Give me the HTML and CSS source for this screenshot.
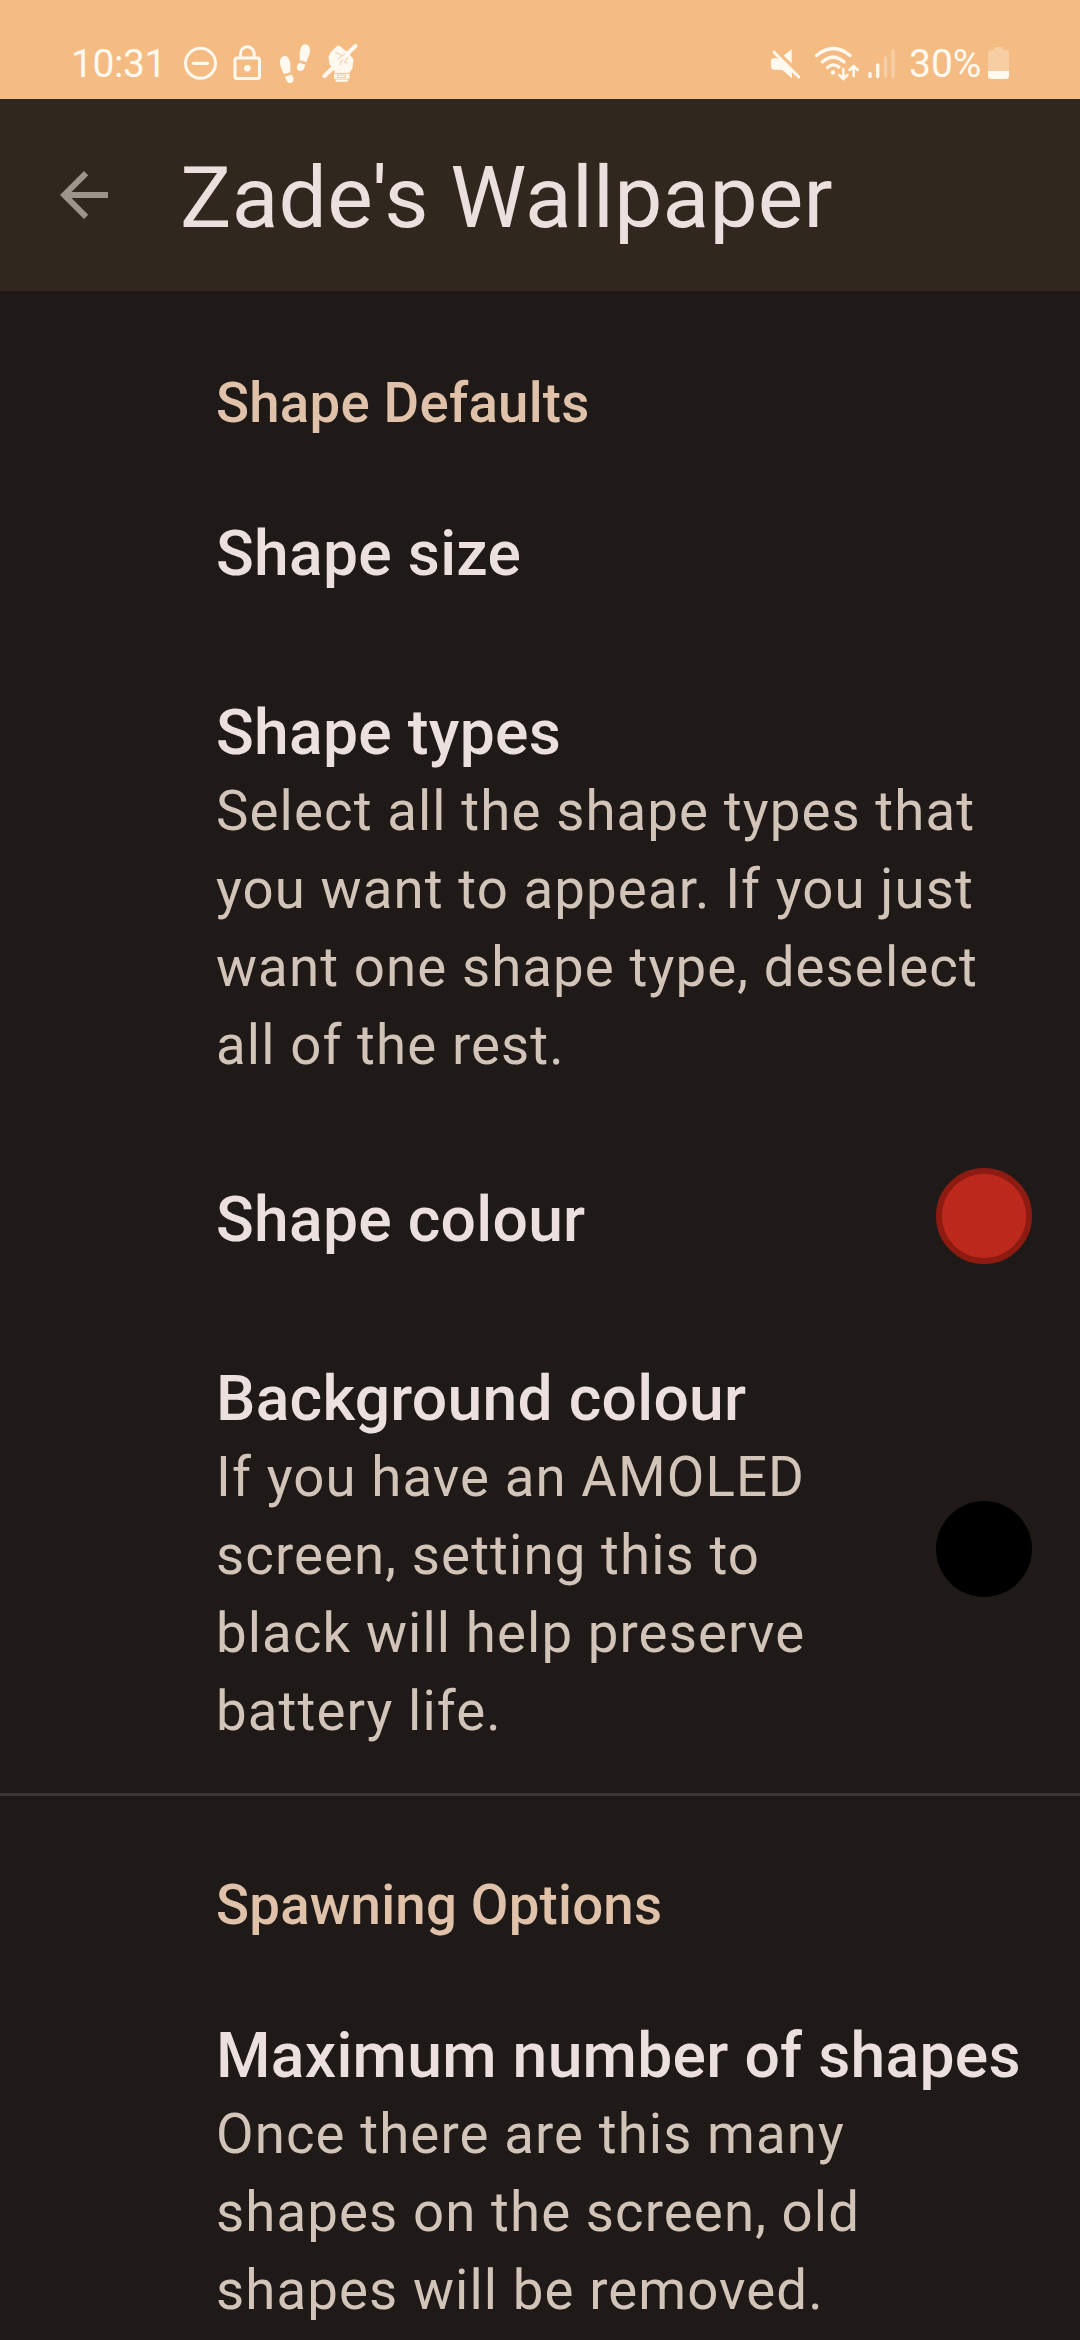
FILE: index.html
```html
<!DOCTYPE html>
<html lang="en">
<head>
<meta charset="utf-8">
<title>Zade's Wallpaper</title>
<link rel="stylesheet" href="styles.css">
</head>
<body>
<div class="screen">
  <div class="status-bar">
    <span class="clock">10:31</span>
    <svg class="icon-dnd" width="34" height="40" viewBox="184 44 34 40"><circle cx="200.5" cy="63.3" r="15" fill="none" stroke="currentColor" stroke-width="3"/><path d="M193.500 63.300h14" stroke="currentColor" stroke-width="3.200" stroke-linecap="round"/></svg>
    <svg class="icon-lock" width="28" height="40" viewBox="233 44 28 40"><rect x="235" y="58" width="24.500" height="20.500" rx="2" fill="none" stroke="currentColor" stroke-width="3"/><path d="M240.500 57v-3.500a6.800 6.800 0 0 1 13.600 0V57" fill="none" stroke="currentColor" stroke-width="3"/><circle cx="247.300" cy="68.300" r="3.300" fill="currentColor"/></svg>
    <svg class="icon-steps" width="32" height="40" viewBox="279 44 32 40"><g fill="currentColor"><path d="M284.500 56c-4 .5-5 4.500-4.300 8.500.5 3 2.300 6 3.500 9.500l6.800-1.800c-.4-3 .3-5.300-.3-9-.7-4.200-2.500-7.600-5.700-7.200z"/><path d="M285 76.500l6.800-2c.9 1.700 2 3.700 1.600 5.700-.6 3-4.600 3.900-6.200 1.600-1.200-1.600-1.300-3.500-2.200-5.300z"/><path d="M305.500 44.200c4 .6 5 4.500 4.300 8.500-.6 3-2.400 5.800-3.200 9.300l-6.900-1.800c.4-3-.3-5.300.3-9 .7-4.200 2.500-7.600 5.500-7z"/><path d="M299 62.700l6.300 1.800c-.5 1.700-.6 3.500-1.800 5-1.700 2.300-5.600 1.800-6.500-1-.6-2 1.100-4 2-5.800z"/></g></svg>
    <svg class="icon-hand" width="37" height="40" viewBox="322 44 37 40"><path d="M324.500 76L355.500 46" stroke="currentColor" stroke-width="4" stroke-linecap="round"/><path fill="currentColor" d="M328.500 57l2-4.500 7-7 2.500.5 4.500 4 3 1.500 6 8-1.200 9-3.300 5H335l-1.500-5-4-4.500z"/><path d="M334 73.500h15.500v5.300H334zM335.500 79.500h12.500v2.200h-12.500z" fill="currentColor"/><path d="M335 52.500q4 .5 7 3.500l-4.500 3.500M342 56l3-2M340 65q.5-3.500 3-5.500M348 57l-3.500 5.500 3 .5M334.500 73.400h15M337.500 75h8v2.500h-8z" fill="none" stroke="#f4bc83" stroke-width=".8"/></svg>
    <svg class="icon-mute" width="31" height="40" viewBox="770 44 31 40"><path fill="currentColor" d="M791.700 49.200v14.300l-8-8z"/><path fill="currentColor" d="M773.500 58.200h5L792 71.500v6.800l-10-8.500h-7.500q-3.500 0-3.500-3.500v-5.300q0-2.800 2.500-2.800z"/><path d="M774 52.200l24.800 24.800" stroke="currentColor" stroke-width="3" stroke-linecap="round"/></svg>
    <svg class="icon-wifi" width="45" height="40" viewBox="814 44 45 40"><g fill="none" stroke="currentColor" stroke-width="3.200" stroke-linecap="round"><path d="M816.500 55.500q17-14 33.500 0M822.300 62q11-9.500 21.800 0M827.500 67.500q5.800-5 11.500-.5"/><path stroke-width="2.600" d="M843.300 69v9M839.300 75l4 4 4-4M853.700 76v-9.500M849.700 70l4-4 4 4"/></g><circle cx="833" cy="72.500" r="2.200" fill="currentColor"/></svg>
    <svg class="icon-signal" width="29" height="40" viewBox="867 44 29 40"><g stroke="currentColor" stroke-width="3.400" stroke-linecap="round"><path d="M870 73.500v3M877.700 65v11.500"/><path opacity=".3" d="M885.500 58v18.500M893 51v25.500"/></g></svg>
    <span class="percent">30%</span>
    <svg class="icon-battery" width="22" height="40" viewBox="988 44 22 40"><path fill="currentColor" opacity=".3" d="M994 50v-1.500q0-1.500 1.500-1.500h6q1.500 0 1.500 1.500V50h3q3 0 3 3v18h-21V53q0-3 3-3z"/><path fill="currentColor" d="M988 71h21v5q0 3-3 3h-15q-3 0-3-3z"/></svg>
  </div>
  <header class="app-bar">
    <svg class="back" width="72" height="72" viewBox="0 0 24 24"><path fill="currentColor" d="M20 11H7.830l5.590-5.590L12 4l-8 8 8 8 1.410-1.410L7.830 13H20v-2z"/></svg>
    <h1 class="app-title">Zade's Wallpaper</h1>
  </header>
  <main class="settings">
    <section class="category">
      <h2 class="category-title">Shape Defaults</h2>
      <div class="preference"><h3 class="title">Shape size</h3></div>
      <div class="preference">
        <h3 class="title">Shape types</h3>
        <p class="summary">Select all the shape types that you want to appear. If you just want one shape type, deselect all of the rest.</p>
      </div>
      <div class="preference with-swatch compact">
        <h3 class="title">Shape colour</h3>
        <span class="swatch swatch-red"></span>
      </div>
      <div class="preference with-swatch">
        <div class="text">
          <h3 class="title">Background colour</h3>
          <p class="summary">If you have an AMOLED screen, setting this to black will help preserve battery life.</p>
        </div>
        <span class="swatch swatch-black"></span>
      </div>
    </section>
    <section class="category divided">
      <h2 class="category-title">Spawning Options</h2>
      <div class="preference">
        <h3 class="title">Maximum number of shapes</h3>
        <p class="summary">Once there are this many shapes on the screen, old shapes will be removed.</p>
      </div>
    </section>
  </main>
</div>
</body>
</html>
```
FILE: styles.css
```css
* { box-sizing: border-box; }
body { margin: 0; background: #1f1a17; font-family: Roboto, sans-serif; color: #ebe0dd; }
h1, h2, h3, p { margin: 0; }
svg { display: block; flex: none; }
.screen { width: 1080px; height: 2340px; overflow: hidden; }

.status-bar { display: flex; height: 99px; padding: 44px 70px 0 71px; background: #f4bc83; color: #fff9f0; }
.clock, .percent { font-size: 39px; line-height: 40px; white-space: nowrap; }
.clock { width: 113px; letter-spacing: -.4px; }
.icon-lock { margin-left: 15px; }
.icon-steps { margin-left: 18px; }
.icon-hand { margin-left: 11px; }
.icon-mute { margin-left: auto; }
.icon-wifi { margin-left: 13px; }
.icon-signal { margin-left: 8px; }
.percent { width: 79px; margin-left: 13px; }

.app-bar { display: flex; align-items: center; height: 192px; padding-left: 48px; background: #30271f; }
.back { color: #9d958b; }
.app-title { margin-left: 60px; padding-top: 6px; font-size: 85.8px; font-weight: 400; line-height: 100px; letter-spacing: .0026em; white-space: nowrap; }

.category-title { height: 166px; padding: 73px 0 0 216px; font-size: 54.6px; font-weight: 500; line-height: 78px; letter-spacing: .004em; color: #dfc2a9; }
.divided { border-top: 3px solid #3b3633; }
.divided .category-title { height: 163px; padding-top: 70px; }
.preference { padding: 58px 48px 43px 216px; }
.title { font-size: 62.4px; font-weight: 500; line-height: 78px; letter-spacing: .0045em; white-space: nowrap; }
.summary { font-size: 54.6px; line-height: 78px; letter-spacing: .02em; color: #d2c4b8; }
.with-swatch { display: flex; align-items: center; justify-content: space-between; }
.text { width: 650px; }
.swatch { flex: none; width: 96px; height: 96px; margin-top: -12px; border-radius: 50%; }
.compact { padding-top: 54px; }
.compact .swatch { margin: -14px 0 -6px; }
.swatch-red { background: #bd281c; border: 6px solid #8d1b12; }
.swatch-black { background: #000; }
```
